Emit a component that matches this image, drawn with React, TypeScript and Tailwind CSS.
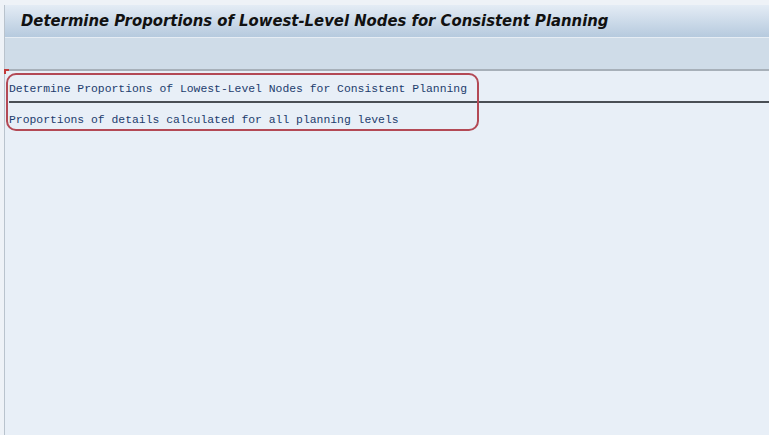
export default function App() {
  return (
    <div className="flex h-[435px] w-[769px] flex-col overflow-hidden bg-[#eef2f7] pl-[4px] pt-[5px]">
      <div className="flex min-h-0 flex-1 flex-col border-l border-[#b9c3cd]">
        <div className="flex h-[32px] shrink-0 items-center bg-gradient-to-b from-[#e4ecf5] to-[#b6cade] pl-[16px]">
          <h1 className="font-['DejaVu_Sans_Condensed','DejaVu_Sans',sans-serif] text-[16.5px] font-bold italic text-[#111]">
            Determine Proportions of Lowest-Level Nodes for Consistent Planning
          </h1>
        </div>
        <div className="h-[34px] shrink-0 border-t border-[#e6edf4] border-b-2 border-b-[#a7b0b9] bg-[#cfdce8]" />
        <div className="relative flex-1 bg-[#e8eff7] pt-[8px] font-['Liberation_Mono',monospace] text-[11.4px] text-[#1d3d6e]">
          <div className="pointer-events-none absolute left-[-1px] top-[-2px] h-[5px] w-[5px] border-l-2 border-t-2 border-[#c23a3a]" />
          <div className="pointer-events-none absolute left-[1px] top-[2px] h-[58px] w-[473px] rounded-[10px] border-2 border-[#b34955]" />
          <div className="flex h-[22px] items-center pl-[4px]">Determine Proportions of Lowest-Level Nodes for Consistent Planning</div>
          <div className="ml-[4px] h-[2px] bg-[#4a4f55]" />
          <div className="flex h-[35px] items-center pl-[4px]">Proportions of details calculated for all planning levels</div>
        </div>
      </div>
    </div>
  );
}
